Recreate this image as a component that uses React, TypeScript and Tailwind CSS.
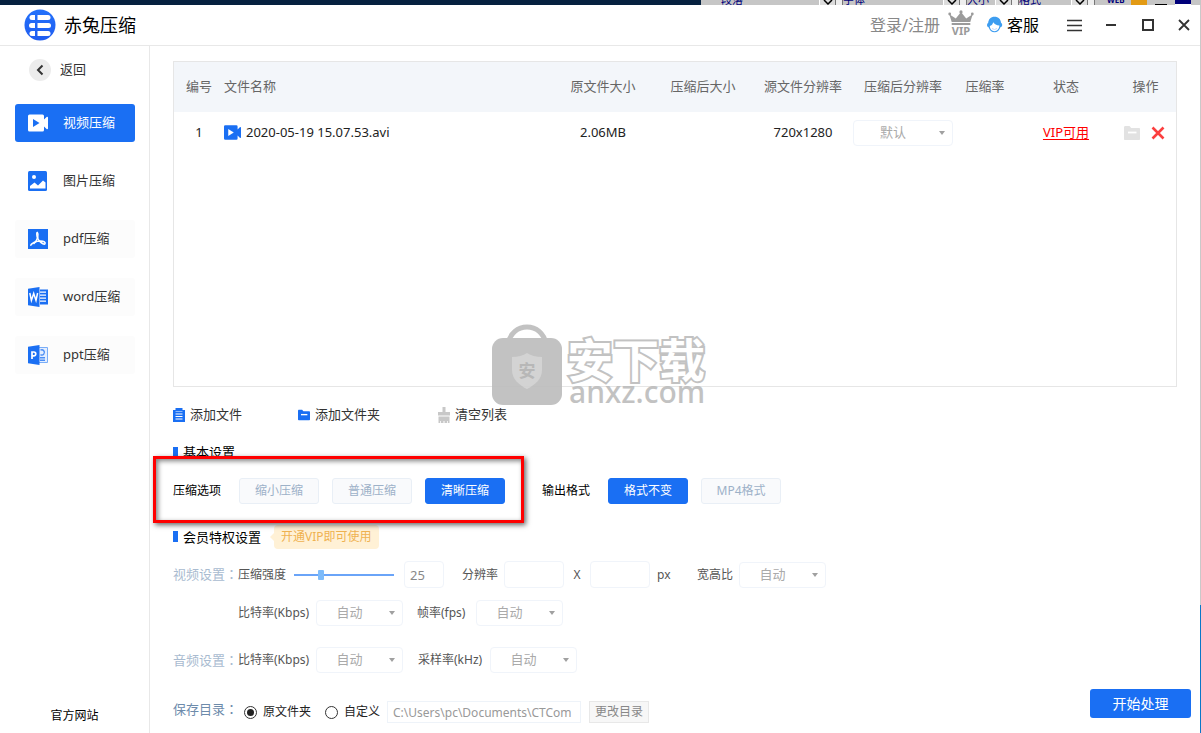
import type { ReactNode } from 'react'

function LogoIcon() {
  return (
    <svg width="32" height="32" viewBox="0 0 32 32">
      <defs>
        <linearGradient id="logo" x1="0" y1="0" x2="0" y2="1">
          <stop offset="0" stopColor="#2472fb" />
          <stop offset="1" stopColor="#1f5cf0" />
        </linearGradient>
      </defs>
      <circle cx="16" cy="16" r="15.5" fill="url(#logo)" />
      <g fill="#fff">
        <path d="M8 6h3v5H8a2.500 2.500 0 0 1 0-5Z" />
        <path d="M13.500 6H24a2.500 2.500 0 0 1 0 5H13.500Z" />
        <path d="M7.500 14H11v5H7.500a2.500 2.500 0 0 1 0-5Z" />
        <path d="M13.500 14h11a2.500 2.500 0 0 1 0 5h-11Z" />
        <path d="M8 22h3v5H8a2.500 2.500 0 0 1 0-5Z" />
        <path d="M13.500 22H24a2.500 2.500 0 0 1 0 5H13.500Z" />
      </g>
    </svg>
  )
}

function VideoIcon({ size, color, play }: { size: number; color: string; play: string }) {
  return (
    <svg width={size} height={size} viewBox="0 0 20 20">
      <path d="M1.500 1.500h13A1.500 1.500 0 0 1 16 3v3.500l2.600-2.600c.600-.500 1.400-.200 1.400.600v11c0 .800-.800 1.100-1.400.600L16 13.500V17a1.500 1.500 0 0 1-1.500 1.500h-13A1.500 1.500 0 0 1 0 17V3a1.500 1.500 0 0 1 1.500-1.500Z" fill={color} />
      <path d="M5 6v8l6.500-4Z" fill={play} />
    </svg>
  )
}

function ImageIcon() {
  return (
    <svg width="20" height="20" viewBox="0 0 20 20">
      <rect width="19" height="20" rx="1.500" fill="#1a6ff3" />
      <circle cx="6" cy="6" r="2" fill="#fff" />
      <path d="M2 17.500v-2.500l4.500-3.500 3.500 3 5-5 2.500 2v6Z" fill="#fff" />
    </svg>
  )
}

function PdfIcon() {
  return (
    <svg width="20" height="20" viewBox="0 0 20 20">
      <rect width="20" height="20" fill="#1a6ff3" />
      <g fill="none" stroke="#fff" strokeWidth="1.600" strokeLinecap="round" strokeLinejoin="round">
        <path d="M9.300 3.500c-1.200 1.500-.200 6 2.200 8.700" />
        <path d="M9.300 3.500c1.500 1.800.700 7.500-3.300 11" />
        <path d="M2.800 16.200c.200-1.700 5-4.200 9.700-4.200 3.800 0 5 1.500 4.500 2.700-.700 1.300-3-.200-5.500-2.500" />
      </g>
    </svg>
  )
}

function WordIcon() {
  return (
    <svg width="20" height="20" viewBox="0 0 20 20">
      <path d="M0 1.700 11.500 0v20L0 18.300Z" fill="#1a6ff3" />
      <path d="M12 2.500h8v15h-8Z" fill="#1a6ff3" />
      <path d="M12 5.200h6M12 8.200h6M12 11.200h6M12 14.200h6" stroke="#fff" strokeWidth="1.200" />
      <path d="m1.800 6 1.600 7.500L5.700 6.500 8 13.500 9.600 6" fill="none" stroke="#fff" strokeWidth="1.500" />
    </svg>
  )
}

function PptIcon() {
  return (
    <svg width="20" height="20" viewBox="0 0 20 20">
      <path d="M11 2.500h8.500v15H11" fill="#e3eeff" stroke="#79adf8" />
      <path d="M12.500 5.200a2.600 2.600 0 1 1 0 4.500M12 12.700h5M12 15.200h5" fill="none" stroke="#4a8df5" strokeWidth="1.400" />
      <path d="M0 1.700 11.500 0v20L0 18.300Z" fill="#1a6ff3" />
      <path d="M4 14V7h1.800a1.900 1.900 0 0 1 0 3.900H4" fill="none" stroke="#fff" strokeWidth="1.700" />
    </svg>
  )
}

function CrownIcon() {
  return (
    <svg width="26" height="26" viewBox="0 0 26 26">
      <g fill="#9b9b9b">
        <circle cx="13" cy="1.900" r="1.600" />
        <circle cx="1.700" cy="4" r="1.400" />
        <circle cx="24.300" cy="4" r="1.400" />
        <path d="M1.300 4.200 7.800 8.500 13 2l5.200 6.500 6.500-4.300L22.300 12H3.700Z" />
        <path d="M3.700 13h18.600v2H3.700Z" />
      </g>
      <text x="13" y="25" textAnchor="middle" fontSize="11" fontWeight="700" fill="#9b9b9b">VIP</text>
    </svg>
  )
}

function ServiceIcon() {
  return (
    <svg width="16" height="18" viewBox="0 0 16 18">
      <path d="M7.500.800c4 0 6.300 2.600 6.500 6 .900.500 1.200 1.300 1.200 2.200 0 1.200-.700 2-1.800 2.200-.900 3-3 5-5.900 5s-5-2-5.900-5C.600 11 0 10.200 0 9c0-.900.400-1.700 1.200-2.200.300-3.400 2.500-6 6.300-6Z" fill="#3d9df0" />
      <path d="M2.800 10c1.800-.500 3-1.800 3.400-3.700 1.200 1.900 3.400 3 6.200 3.200-.100 3.400-2.200 5.700-4.900 5.700S2.900 13 2.800 10Z" fill="#fff" />
      <path d="M5 12.500a4 4 0 0 0 5 0" fill="none" stroke="#c3d8fb" />
    </svg>
  )
}

function FolderIcon({ color, width }: { color: string; width: number }) {
  return (
    <svg width={width} height={width} viewBox="0 0 16 16">
      <path d="M0 2.500C0 1.700.500 1 1.300 1h4.200l1.700 2H15c.600 0 1 .400 1 1v10c0 .600-.400 1-1 1H1c-.600 0-1-.400-1-1Z" fill={color} />
      <path d="M4 7.500h8.500" stroke="#fff" strokeWidth="1.800" />
    </svg>
  )
}

function ClipboardIcon() {
  return (
    <svg width="12" height="14" viewBox="0 0 12 14">
      <path d="M0 2h12v12H0Z" fill="#1a6ff3" />
      <path d="M2.500 0h7v3h-7Z" fill="#1a6ff3" />
      <path d="M2.500 3.500h7" stroke="#a9cbfb" strokeWidth=".800" />
      <path d="M2.500 6h7M2.500 8.500h7M2.500 11h7" stroke="#fff" />
    </svg>
  )
}

function BroomIcon() {
  return (
    <svg width="12" height="16" viewBox="0 0 12 16">
      <path d="M4.500 0h3v5H12v3.500H0V5h4.500Z" fill="#c8c8c8" />
      <path d="M.500 9.500h11V16H9.800v-2H9v2H6.500v-2h-1v2H3v-2h-.8v2H.500Z" fill="#c8c8c8" />
    </svg>
  )
}

function Watermark() {
  return (
    <div className="pointer-events-none absolute -bottom-5 left-[317px] flex items-end opacity-90">
      <svg width="72" height="82" viewBox="0 0 72 82">
        <path d="M17 20c2-11 10-17 19-17s17 6 19 17" fill="none" stroke="#bcbcbc" strokeWidth="5" />
        <rect y="14" x="1" width="70" height="67" rx="11" fill="#bcbcbc" />
        <path d="M21 33c6 0 11-1.500 15-4 4 2.500 9 4 15 4v13c0 9-7 15-15 19-8-4-15-10-15-19Z" fill="#cfcfcf" />
        <text x="36" y="53" textAnchor="middle" fontSize="17" fontWeight="700" fill="#b0b0b0">安</text>
      </svg>
      <div className="ml-1 flex flex-col">
        <span className="text-[46px] leading-[38px] font-bold text-white [-webkit-text-stroke:4px_#bcbcbc] [paint-order:stroke]">安下载</span>
        <span className="pl-0.5 text-[30px] leading-7 font-medium text-[#bcbcbc]">anxz.com</span>
      </div>
    </div>
  )
}

const navItems = [
  { label: '视频压缩', icon: <VideoIcon size={20} color="#fff" play="#1a6ff3" />, className: 'bg-[#1a6ff3] text-white' },
  { label: '图片压缩', icon: <ImageIcon />, className: 'bg-white' },
  { label: 'pdf压缩', icon: <PdfIcon />, className: 'bg-[#fcfcfc]' },
  { label: 'word压缩', icon: <WordIcon />, className: 'bg-[#fcfcfc]' },
  { label: 'ppt压缩', icon: <PptIcon />, className: 'bg-[#fcfcfc]' },
]

function Dropdown({ label, value, className }: { label: string; value: string; className: string }) {
  return (
    <div className={`relative h-[26px] ${className}`}>
      <select aria-label={label} className="block size-full appearance-none rounded-sm border border-[#f0f4fa] bg-white pr-5 text-center text-[13px] text-[#aaa] outline-none">
        <option>{value}</option>
      </select>
      <span className="pointer-events-none absolute top-[11px] right-2 border-x-[3px] border-t-4 border-x-transparent border-t-[#a0a0a0]" />
    </div>
  )
}

function Choice({ children, active = false }: { children: ReactNode; active?: boolean }) {
  return (
    <button
      className={`h-[26px] w-20 rounded-[3px] border text-xs ${
        active ? 'border-[#1a6ff3] bg-[#1a6ff3] text-white' : 'border-[#e9eff6] bg-[#f9fafc] text-[#9db1c8]'
      }`}
    >
      {children}
    </button>
  )
}

function NumberBox({ label, value, className }: { label: string; value?: string; className: string }) {
  return (
    <input
      aria-label={label}
      defaultValue={value}
      className={`h-[27px] rounded-sm border border-[#f0f4fa] bg-white px-[5px] text-[13px] text-[#888] outline-none ${className}`}
    />
  )
}

function Radio({ label, checked = false }: { label: string; checked?: boolean }) {
  return (
    <label className="flex items-center gap-1.5 text-xs text-[#222]">
      <input
        type="radio"
        name="target"
        defaultChecked={checked}
        className="grid size-[13px] appearance-none place-items-center rounded-full border border-[#333] before:size-[7px] before:rounded-full checked:before:bg-[#222]"
      />
      {label}
    </label>
  )
}

function RowLabel({ children, className }: { children: string; className: string }) {
  return (
    <span className={`text-[13px] whitespace-nowrap ${className}`}>
      {children}
      <span lang="zh-TW" className="font-['Noto_Sans_CJK_TC',sans-serif]">：</span>
    </span>
  )
}

function BackdropField({ label, className }: { label: string; className: string }) {
  return (
    <div className={`flex items-end ${className}`}>
      <span>{label}</span>
      <span className="ml-auto flex h-[5px] w-4 justify-center border-l border-white bg-[#dcdcdc]">
        <svg width="10" height="5" viewBox="0 0 10 5"><path d="m1 0 4 4 4-4" fill="none" stroke="#000" strokeWidth="1.500" /></svg>
      </span>
      <span className="h-[5px] w-2 border-x border-[#777] bg-[#eee]" />
    </div>
  )
}

// slice of the toolbar of the window behind this one
function BackdropStrip() {
  return (
    <div className="flex h-[5px] overflow-hidden bg-[#c6c6c6] text-[11px]">
      <div className="w-[701px] shrink-0 bg-[#06213f]" />
      <div className="flex flex-1 items-end pl-5 leading-[10px] text-[#00007a]">
        <BackdropField label="段落" className="w-[122px]" />
        <BackdropField label="字体" className="w-[124px]" />
        <BackdropField label="大小" className="w-[52px]" />
        <BackdropField label="格式" className="w-[76px]" />
        <span className="ml-3 w-6 text-[8px] font-bold">WEB</span>
        <span className="mr-2 h-[5px] w-4 bg-[#e29a14]" />
        <span className="mr-2 h-px w-3 bg-black" />
        <span className="h-[5px] w-4 border-t-4 border-[#00007a] bg-white" />
      </div>
    </div>
  )
}

function TitleBar() {
  return (
    <header className="flex h-[41px] items-center border-b border-[#e8e8e8] pr-2.5 pl-6">
      <LogoIcon />
      <h1 className="ml-2 text-lg text-black">赤兔压缩</h1>
      <a href="#login" className="ml-auto text-base text-[#888]">登录/注册</a>
      <a href="#vip" aria-label="VIP" className="ml-2 mb-1"><CrownIcon /></a>
      <a href="#service" className="ml-[13px] flex items-center gap-1 text-base text-black">
        <ServiceIcon />
        客服
      </a>
      <div className="ml-7 flex items-center gap-6 text-[#333]">
        <button aria-label="菜单">
          <svg width="15" height="13" viewBox="0 0 15 13"><path d="M0 1.500h15M0 6.500h15M0 11.500h15" stroke="currentColor" strokeWidth="1.500" /></svg>
        </button>
        <button aria-label="最小化">
          <svg width="10" height="12" viewBox="0 0 10 12"><path d="M0 6h10" stroke="currentColor" strokeWidth="2" /></svg>
        </button>
        <button aria-label="最大化" className="ml-0.5">
          <svg width="12" height="12" viewBox="0 0 12 12"><path d="M1 1h10v10H1Z" fill="none" stroke="currentColor" strokeWidth="2" /></svg>
        </button>
        <button aria-label="关闭">
          <svg width="12" height="12" viewBox="0 0 12 12"><path d="m1 1 10 10M11 1 1 11" stroke="currentColor" strokeWidth="1.800" /></svg>
        </button>
      </div>
    </header>
  )
}

function Sidebar() {
  return (
    <aside className="flex w-[150px] shrink-0 flex-col border-r border-[#e8e8e8] text-[13px] text-[#333]">
      <button className="mt-[13px] ml-[29px] flex items-center gap-[9px]">
        <span className="grid size-[22px] place-items-center rounded-full bg-[#ececec]">
          <svg width="8" height="12" viewBox="0 0 8 12"><path d="M6.500 1.500 2 6l4.500 4.500" fill="none" stroke="#333" strokeWidth="2" /></svg>
        </span>
        返回
      </button>
      <nav className="mt-[23px] flex flex-col gap-5 pr-[14px] pl-[15px]">
        {navItems.map((item) => (
          <button key={item.label} className={`flex h-[38px] items-center gap-[15px] rounded-[3px] pl-[13px] ${item.className}`}>
            {item.icon}
            {item.label}
          </button>
        ))}
      </nav>
      <a href="#site" className="mt-auto mb-2 self-center text-xs leading-[18px] text-black">官方网站</a>
    </aside>
  )
}

function FileTable() {
  return (
    <div className="relative mr-[14px] min-h-[200px] flex-1 border border-[#e6e6e6]">
      <table className="w-full table-fixed text-center text-[13px] text-[#222]">
        <thead>
          <tr className="h-[50px] bg-[#f3f6fa] text-[#666]">
            <th className="w-[50px] font-normal">编号</th>
            <th className="text-left font-normal">文件名称</th>
            <th className="w-[100px] font-normal">原文件大小</th>
            <th className="w-[100px] font-normal">压缩后大小</th>
            <th className="w-[100px] font-normal">源文件分辨率</th>
            <th className="w-[100px] font-normal">压缩后分辨率</th>
            <th className="w-[64px] font-normal">压缩率</th>
            <th className="w-[98px] font-normal">状态</th>
            <th className="w-[61px] font-normal">操作</th>
          </tr>
        </thead>
        <tbody>
          <tr className="h-[42px]">
            <td>1</td>
            <td>
              <span className="flex items-center gap-[5px]">
                <VideoIcon size={17} color="#1a6ff3" play="#fff" />
                2020-05-19 15.07.53.avi
              </span>
            </td>
            <td>2.06MB</td>
            <td />
            <td>720x1280</td>
            <td><Dropdown label="压缩后分辨率" value="默认" className="w-[100px]" /></td>
            <td />
            <td><a href="#vip" className="text-[#f00] underline underline-offset-2">VIP可用</a></td>
            <td>
              <span className="flex items-center gap-[11px] pl-[9px]">
                <button aria-label="打开文件夹"><FolderIcon color="#e2e2e2" width={16} /></button>
                <button aria-label="删除">
                  <svg width="14" height="14" viewBox="0 0 14 14"><path d="m1.500 1.500 11 11M12.500 1.500l-11 11" stroke="#fb3f3f" strokeWidth="2.600" /></svg>
                </button>
              </span>
            </td>
          </tr>
        </tbody>
      </table>
      <Watermark />
    </div>
  )
}

function SectionTitle({ children }: { children: ReactNode }) {
  return (
    <h2 className="flex items-center gap-[5px] text-[13px] leading-5 text-black">
      <span className="h-[11px] w-[5px] bg-[#1a6ff3]" />
      {children}
    </h2>
  )
}

export default function App() {
  return (
    <div className="flex min-h-screen flex-col bg-white font-['Noto_Sans','Noto_Sans_CJK_SC',sans-serif]">
      <BackdropStrip />
      <div className="flex flex-1">
        <div className="flex flex-1 flex-col">
          <TitleBar />
          <div className="flex flex-1">
            <Sidebar />
            <main className="flex flex-1 flex-col pt-[15px] pr-[9px] pb-[10px] pl-[23px] text-xs text-[#555]">
              <FileTable />

              <div className="mt-[15px] flex h-[26px] items-center gap-14 text-[13px] text-[#333]">
                <button className="flex items-center gap-[5px]"><ClipboardIcon />添加文件</button>
                <button className="flex items-center gap-[5px]"><FolderIcon color="#1a6ff3" width={12} />添加文件夹</button>
                <button className="ml-0.5 flex items-center gap-[5px]"><BroomIcon />清空列表</button>
              </div>

              <div className="mt-[14px]"><SectionTitle>基本设置</SectionTitle></div>

              <div className="mt-4 flex items-center text-black">
                <div className="relative flex items-center gap-[13px]">
                  <span className="mr-[5px]">压缩选项</span>
                  <Choice>缩小压缩</Choice>
                  <Choice>普通压缩</Choice>
                  <Choice active>清晰压缩</Choice>
                  <div className="pointer-events-none absolute -top-[22px] -right-[19px] -bottom-[19px] -left-5 border-[3px] border-[#f00] shadow-[2px_2px_5px_rgba(0,0,0,0.6),inset_2px_2px_5px_rgba(0,0,0,0.5)]" />
                </div>
                <div className="ml-[37px] flex items-center gap-[13px]">
                  <span className="mr-[5px]">输出格式</span>
                  <Choice active>格式不变</Choice>
                  <Choice>MP4格式</Choice>
                </div>
              </div>

              <div className="mt-5 flex h-[25px] items-center">
                <SectionTitle>会员特权设置</SectionTitle>
                <span className="ml-[9px] border-y-4 border-r-4 border-y-transparent border-r-[#fff1d6]" />
                <a href="#vip" className="rounded-sm bg-[#fff1d6] px-[7px] leading-6 text-[#efb251]">开通VIP即可使用</a>
              </div>

              <div className="mt-3 flex items-center">
                <RowLabel className="w-[65px] text-[#a9bbd0]">视频设置</RowLabel>
                <label htmlFor="strength">压缩强度</label>
                <input
                  id="strength"
                  type="range"
                  defaultValue={25}
                  className="ml-2 h-[2px] w-[100px] appearance-none bg-[#6aa4f8] [&::-webkit-slider-thumb]:h-[10px] [&::-webkit-slider-thumb]:w-[6px] [&::-webkit-slider-thumb]:appearance-none [&::-webkit-slider-thumb]:rounded-[1px] [&::-webkit-slider-thumb]:bg-[#7dbbfa]"
                />
                <NumberBox label="压缩强度值" value="25" className="ml-2.5 w-10" />
                <span className="ml-[18px]">分辨率</span>
                <NumberBox label="宽" className="ml-1.5 w-[60px]" />
                <span className="w-[26px] text-center">X</span>
                <NumberBox label="高" className="w-[60px]" />
                <span className="ml-[7px] w-10">px</span>
                <span>宽高比</span>
                <Dropdown label="宽高比" value="自动" className="ml-1.5 w-[87px]" />
              </div>

              <div className="mt-3 flex items-center pl-[65px]">
                <span className="w-[78px]">比特率(Kbps)</span>
                <Dropdown label="视频比特率" value="自动" className="w-[87px]" />
                <span className="ml-[14px] w-[59px]">帧率(fps)</span>
                <Dropdown label="帧率" value="自动" className="w-[87px]" />
              </div>

              <div className="mt-[21px] flex items-center">
                <RowLabel className="w-[65px] text-[#a9bbd0]">音频设置</RowLabel>
                <span className="w-[78px]">比特率(Kbps)</span>
                <Dropdown label="音频比特率" value="自动" className="w-[87px]" />
                <span className="ml-[15px] w-[72px]">采样率(kHz)</span>
                <Dropdown label="采样率" value="自动" className="w-[87px]" />
              </div>

              <div className="mt-4 flex items-start">
                <RowLabel className="w-[71px] pt-2 leading-6 text-[#6d8bab]">保存目录</RowLabel>
                <div className="mt-3 flex h-[22px] items-center">
                  <Radio label="原文件夹" checked />
                  <span className="w-[14px]" />
                  <Radio label="自定义" />
                  <input
                    aria-label="保存目录"
                    readOnly
                    value="C:\Users\pc\Documents\CTCom"
                    className="ml-[7px] h-[22px] w-[194px] border border-[#eef3f9] bg-white px-[5px] text-[#999] outline-none"
                  />
                  <button className="ml-2 h-[22px] w-[60px] border border-[#e8e8e8] bg-[#f7f7f7] text-[#888]">更改目录</button>
                </div>
                <button className="ml-auto h-[29px] w-[101px] rounded-[3px] bg-[#1a6ff3] text-sm text-white">开始处理</button>
              </div>
            </main>
          </div>
        </div>
        <div className="flex w-px flex-col bg-[#c9c9c9]">
          <div className="mt-auto h-32 bg-[#0a78c8]" />
        </div>
      </div>
    </div>
  )
}
